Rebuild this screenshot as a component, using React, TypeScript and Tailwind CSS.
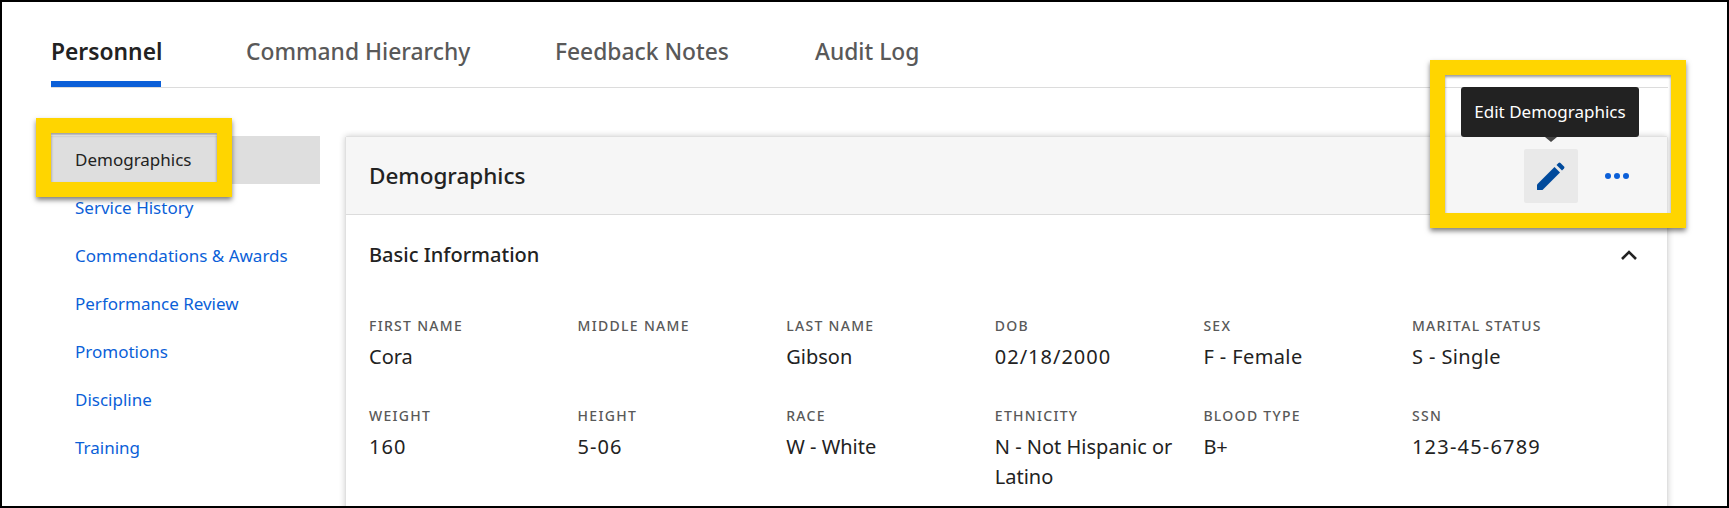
const font = "font-['Noto_Sans',sans-serif]";

const tabs = [
  { label: "Personnel", width: "w-[110px]", active: true },
  { label: "Command Hierarchy", width: "w-[224px]", active: false },
  { label: "Feedback Notes", width: "w-[175px]", active: false },
  { label: "Audit Log", width: "w-[102px]", active: false },
];

const links = [
  "Service History",
  "Commendations & Awards",
  "Performance Review",
  "Promotions",
  "Discipline",
  "Training",
];

const fields: [string, string[], string][] = [
  ["FIRST NAME", ["Cora"], ""],
  ["MIDDLE NAME", [], ""],
  ["LAST NAME", ["Gibson"], ""],
  ["DOB", ["02/18/2000"], "tracking-[1px]"],
  ["SEX", ["F - Female"], "tracking-[0.4px]"],
  ["MARITAL STATUS", ["S - Single"], "tracking-[0.4px]"],
  ["WEIGHT", ["160"], "tracking-[1px]"],
  ["HEIGHT", ["5-06"], "tracking-[1px]"],
  ["RACE", ["W - White"], ""],
  ["ETHNICITY", ["N - Not Hispanic or", "Latino"], ""],
  ["BLOOD TYPE", ["B+"], ""],
  ["SSN", ["123-45-6789"], "tracking-[1.2px]"],
];

export default function App() {
  return (
    <div className={`${font} relative box-border h-[508px] w-[1729px] overflow-hidden border-2 border-black bg-white pl-[49px] pr-[59px] text-[#222222]`}>
      <div className="box-content flex h-[85px] gap-[85px] border-b border-[#dcdcdc]">
        {tabs.map((t) => (
          <div
            key={t.label}
            className={`${t.width} flex h-[85px] items-start whitespace-nowrap border-b-[6px] pt-[36px] text-[22.8px] leading-[28px] ${
              t.active ? "border-[#0b5fd8] font-semibold text-[#222222]" : "border-transparent font-medium text-[#595959]"
            }`}
          >
            {t.label}
          </div>
        ))}
      </div>

      <div className="mt-[48px] flex">
        <nav className="w-[269px] shrink-0 text-[17px]">
          <div className="flex h-[48px] items-center bg-[#dedede] pl-[24px]">Demographics</div>
          {links.map((l) => (
            <div key={l} className="flex h-[48px] items-center pl-[24px] text-[#0b5fd8]">
              {l}
            </div>
          ))}
        </nav>

        <section className="ml-[25px] h-[400px] flex-1 rounded-t-[2px] border border-[#e0e0e0] shadow-[0_0_6px_rgba(0,0,0,0.2)]">
          <header className="flex h-[78px] items-center justify-between border-b border-[#dcdcdc] bg-[#f6f6f6] pl-[23px] pr-[23px]">
            <h2 className="text-[22.5px] font-medium">Demographics</h2>
            <div className="flex items-center gap-[12px]">
              <div className="flex h-[54px] w-[54px] items-center justify-center rounded-[2px] bg-[#e9e9e9]">
                <svg width="28" height="28" viewBox="0 0 28 28" fill="#004a9c">
                  <path d="M0 22.5 L17.5 5 L23 10.5 L5.5 28 L0.5 28 Q0 28 0 27.5 Z" />
                  <path d="M19.5 3 L21.5 1 Q22.5 0 23.5 1 L27 4.5 Q28 5.5 27 6.5 L25 8.5 Z" />
                </svg>
              </div>
              <div className="flex h-[54px] w-[54px] items-center justify-center gap-[3px]">
                <span className="h-[6px] w-[6px] rounded-full bg-[#0b5fd8]" />
                <span className="h-[6px] w-[6px] rounded-full bg-[#0b5fd8]" />
                <span className="h-[6px] w-[6px] rounded-full bg-[#0b5fd8]" />
              </div>
            </div>
          </header>

          <div className="flex h-[80px] items-center justify-between pl-[23px] pr-[30px]">
            <h3 className="text-[20px] font-medium">Basic Information</h3>
            <svg width="16" height="10" viewBox="0 0 16 10" fill="none" stroke="#222222" strokeWidth="2.6">
              <path d="M1 9 L8 2 L15 9" />
            </svg>
          </div>

          <div className="mt-[21px] grid grid-cols-[repeat(6,208.6px)] gap-y-[34px] pl-[23px]">
            {fields.map(([label, values, extra]) => (
              <div key={label}>
                <div className="text-[14px] font-medium leading-[20px] tracking-[1.3px] text-[#595959]">{label}</div>
                <div className={`mt-[6px] min-h-[30px] text-[20px] leading-[30px] ${extra}`}>
                  {values.map((v) => (
                    <div key={v}>{v}</div>
                  ))}
                </div>
              </div>
            ))}
          </div>
        </section>
      </div>

      {/* yellow callouts */}
      <div className="absolute left-[34px] top-[116px] h-[79px] w-[196px] border-[15px] border-[#ffd500] shadow-[0_3px_5px_rgba(0,0,0,0.5)]">
        <div className="h-full w-full shadow-[inset_0_2px_3px_rgba(0,0,0,0.4)]" />
      </div>
      <div className="absolute left-[1428px] top-[58px] h-[168px] w-[256px] border-[15px] border-[#ffd500] shadow-[0_3px_5px_rgba(0,0,0,0.5)]">
        <div className="h-full w-full shadow-[inset_0_2px_3px_rgba(0,0,0,0.4)]" />
      </div>

      {/* tooltip */}
      <div className="absolute left-[1459px] top-[85px] flex h-[50px] w-[178px] items-center justify-center rounded-[3px] bg-[#222222] text-[17px] text-white">
        Edit Demographics
        <div className="absolute left-[84px] top-[50px] h-0 w-0 border-x-[6px] border-t-[5px] border-x-transparent border-t-[#444444]" />
      </div>
    </div>
  );
}
